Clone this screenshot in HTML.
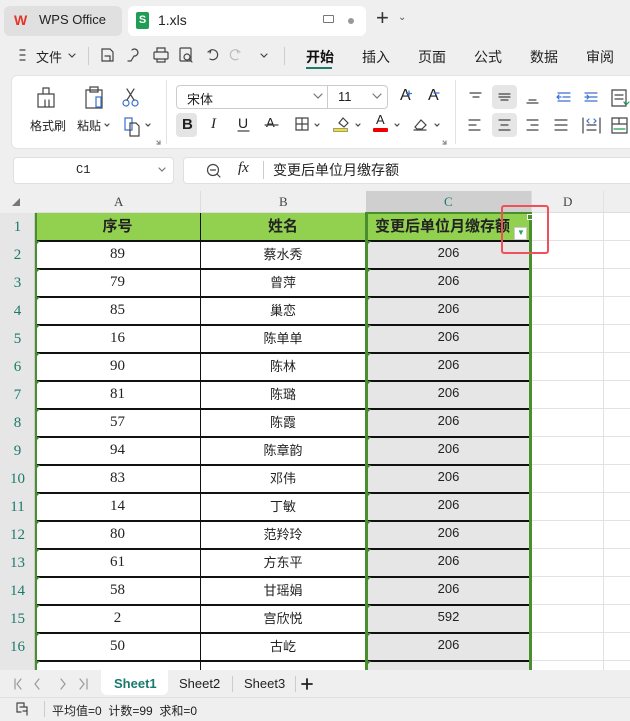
<!DOCTYPE html>
<html><head><meta charset="utf-8"><style>
*{margin:0;padding:0;box-sizing:border-box}
body{width:630px;height:721px;overflow:hidden;background:#efefef;font-family:"Liberation Sans","Noto Sans CJK SC",sans-serif;font-size:13px;color:#222;position:relative}
.a{position:absolute}
.t{position:absolute;white-space:nowrap}
svg.ic{position:absolute;left:0;top:0;width:630px;height:721px;pointer-events:none;z-index:5}
.cell{position:absolute;text-align:center;font-size:14px;line-height:28px;height:28px}
</style></head><body>
<div class="a" style="left:4px;top:6px;width:118px;height:30px;background:#e0e0e0;border-radius:6px"></div>
<div class="t" style="left:14px;top:12px;color:#e5352b;font-weight:bold;font-size:14px">W</div>
<div class="t" style="left:39px;top:12px;font-size:13px;color:#222">WPS Office</div>
<div class="a" style="left:128px;top:6px;width:238px;height:30px;background:#fff;border-radius:6px"></div>
<div class="a" style="left:136px;top:12px;width:13px;height:17px;background:#1f9d55;border-radius:2px;color:#fff;font-size:11px;font-weight:bold;text-align:center;line-height:17px">S</div>
<div class="t" style="left:158px;top:12px;font-size:14px">1.xls</div>
<div class="a" style="left:323px;top:15px;width:11px;height:8px;border:1px solid #777;border-radius:1px"></div>
<div class="a" style="left:348px;top:18px;width:6px;height:6px;background:#999;border-radius:3px"></div>
<div class="t" style="left:376px;top:5px;font-size:22px;color:#333">+</div>
<div class="t" style="left:398px;top:12px;font-size:10px;color:#555">⌄</div>
<div class="t" style="left:36px;top:47px;font-size:13px">文件</div>
<div class="a" style="left:88px;top:47px;width:1px;height:18px;background:#ccc"></div>
<div class="a" style="left:284px;top:47px;width:1px;height:18px;background:#ccc"></div>
<div class="t" style="left:306px;top:47px;font-size:14px;color:#111;font-weight:bold">开始</div>
<div class="a" style="left:306px;top:67px;width:26px;height:2px;background:#1a7a6b"></div>
<div class="t" style="left:362px;top:47px;font-size:14px">插入</div>
<div class="t" style="left:418px;top:47px;font-size:14px">页面</div>
<div class="t" style="left:474px;top:47px;font-size:14px">公式</div>
<div class="t" style="left:530px;top:47px;font-size:14px">数据</div>
<div class="t" style="left:586px;top:47px;font-size:14px">审阅</div>
<div class="a" style="left:11px;top:75px;width:640px;height:74px;background:#fff;border-radius:6px;border:1px solid #e3e3e3"></div>
<div class="a" style="left:166px;top:80px;width:1px;height:64px;background:#e3e3e3"></div>
<div class="a" style="left:455px;top:80px;width:1px;height:64px;background:#e3e3e3"></div>
<div class="t" style="left:30px;top:117px;font-size:12px">格式刷</div>
<div class="t" style="left:77px;top:117px;font-size:12px">粘贴</div>
<div class="a" style="left:176px;top:85px;width:212px;height:24px;border:1px solid #ccc;border-radius:4px"></div>
<div class="a" style="left:327px;top:86px;width:1px;height:22px;background:#ccc"></div>
<div class="t" style="left:187px;top:89px;font-size:13px">宋体</div>
<div class="t" style="left:338px;top:89px;font-size:13px">11</div>
<div class="t" style="left:400px;top:87px;font-size:16px">A</div>
<div class="t" style="left:428px;top:87px;font-size:16px">A</div>
<div class="a" style="left:176px;top:113px;width:21px;height:24px;background:#e4e4e4;border-radius:4px"></div>
<div class="t" style="left:182px;top:116px;font-size:15px;font-weight:bold">B</div>
<div class="t" style="left:211px;top:116px;font-size:15px;font-style:italic;font-family:'Liberation Serif',serif">I</div>
<div class="t" style="left:238px;top:115px;font-size:14px">U</div>
<div class="t" style="left:266px;top:115px;font-size:13px">A</div>
<div class="a" style="left:333px;top:128px;width:15px;height:4px;background:#f5e400;border:1px solid #999"></div>
<div class="a" style="left:373px;top:128px;width:15px;height:4px;background:#e00;border-radius:1px"></div>
<div class="t" style="left:376px;top:112px;font-size:13px">A</div>
<div class="a" style="left:492px;top:85px;width:25px;height:24px;background:#e6e6e6;border-radius:4px"></div>
<div class="a" style="left:492px;top:113px;width:25px;height:24px;background:#e6e6e6;border-radius:4px"></div>
<div class="a" style="left:13px;top:157px;width:161px;height:27px;background:#fff;border-radius:4px;border:1px solid #e0e0e0"></div>
<div class="t" style="left:76px;top:163px;font-size:12px;font-family:'Liberation Mono',monospace">C1</div>
<div class="a" style="left:183px;top:157px;width:460px;height:27px;background:#fff;border-radius:4px;border:1px solid #e0e0e0"></div>
<div class="t" style="left:238px;top:160px;font-size:15px;font-style:italic;font-family:'Liberation Serif',serif">fx</div>
<div class="a" style="left:263px;top:161px;width:1px;height:18px;background:#ccc"></div>
<div class="t" style="left:273px;top:160px;font-size:14px">变更后单位月缴存额</div>
<div class="a" style="left:0;top:191px;width:630px;height:479px;background:#fff"></div>
<div class="a" style="left:0;top:191px;width:630px;height:22px;background:#efefef;border-bottom:1px solid #ddd"></div>
<div class="a" style="left:366px;top:191px;width:165px;height:22px;background:#cfcfcf"></div>
<div class="a" style="left:0;top:191px;width:35px;height:479px;background:#e6e6e6;border-right:1px solid #ccc"></div>
<div class="a" style="left:0;top:191px;width:35px;height:22px;background:#efefef"></div>
<div class="t" style="left:12px;top:197px;font-size:8px;color:#777">◢</div>
<div class="t" style="left:114px;top:194px;font-size:13px;color:#444;font-family:'Liberation Serif',serif">A</div>
<div class="t" style="left:279px;top:194px;font-size:13px;color:#444;font-family:'Liberation Serif',serif">B</div>
<div class="t" style="left:444px;top:194px;font-size:13px;color:#1a7a6b;font-family:'Liberation Serif',serif">C</div>
<div class="t" style="left:563px;top:194px;font-size:13px;color:#444;font-family:'Liberation Serif',serif">D</div>
<div class="a" style="left:200px;top:191px;width:1px;height:22px;background:#ddd"></div>
<div class="a" style="left:603px;top:191px;width:1px;height:479px;background:#e2e2e2"></div>
<div class="a" style="left:531px;top:191px;width:1px;height:22px;background:#ddd"></div>
<div class="a" style="left:35px;top:213px;width:331px;height:28px;background:#92d050"></div>
<div class="a" style="left:366px;top:241px;width:165px;height:429px;background:#e6e6e6"></div>
<div class="a" style="left:366px;top:213px;width:165px;height:28px;background:#92d050"></div>
<div id="rows"></div>
<script>
var d=[["89","蔡水秀","206"],["79","曾萍","206"],["85","巢恋","206"],["16","陈单单","206"],["90","陈林","206"],["81","陈璐","206"],["57","陈霞","206"],["94","陈章韵","206"],["83","邓伟","206"],["14","丁敏","206"],["80","范羚玲","206"],["61","方东平","206"],["58","甘瑶娟","206"],["2","宫欣悦","592"],["50","古屹","206"]];
var h='';
h+='<div class="cell" style="left:0;top:213px;width:35px;color:#1a7a6b;font-family:Liberation Serif,serif;font-size:15px">1</div>';
h+='<div class="cell" style="left:35px;top:213px;width:165px;font-weight:bold;font-size:15px">序号</div>';
h+='<div class="cell" style="left:200px;top:213px;width:166px;font-weight:bold;font-size:15px">姓名</div>';
h+='<div class="cell" style="left:366px;top:213px;width:165px;font-weight:bold;font-size:15px;text-align:left;padding-left:9px">变更后单位月缴存额</div>';
for(var i=0;i<16;i++){var y=241+i*28;
 h+='<div class="a" style="left:35px;top:'+(y-1)+'px;width:496px;height:1.5px;background:#111"></div>';
 h+='<div class="a" style="left:531px;top:'+(y-1)+'px;width:99px;height:1px;background:#e2e2e2"></div>';
 h+='<div class="a" style="left:36px;top:'+y+'px;width:0;height:0;border-top:4px solid #3a8a2a;border-right:4px solid transparent"></div>';
 h+='<div class="a" style="left:367px;top:'+y+'px;width:0;height:0;border-top:4px solid #3a8a2a;border-right:4px solid transparent"></div>';
 if(i<15){var r=d[i];
 h+='<div class="cell" style="left:0;top:'+y+'px;width:35px;color:#1a7a6b;font-family:Liberation Serif,serif;font-size:15px">'+(i+2)+'</div>';
 h+='<div class="cell" style="left:35px;top:'+(y-1)+'px;width:165px;font-family:Liberation Serif,serif;font-size:15px">'+r[0]+'</div>';
 h+='<div class="cell" style="left:200px;top:'+y+'px;width:166px;font-size:13px">'+r[1]+'</div>';
 h+='<div class="cell" style="left:366px;top:'+(y-2)+'px;width:165px;font-size:13px">'+r[2]+'</div>';}
}
document.getElementById('rows').innerHTML=h;
</script>
<div class="a" style="left:199.5px;top:213px;width:1.5px;height:457px;background:#111"></div>
<div class="a" style="left:35px;top:213px;width:2px;height:457px;background:#4a8f2e"></div>
<div class="a" style="left:365px;top:213px;width:3px;height:457px;background:#4a8f2e"></div>
<div class="a" style="left:529px;top:213px;width:3px;height:457px;background:#4a8f2e"></div>
<div class="a" style="left:365px;top:212px;width:167px;height:2px;background:#4a8f2e"></div>
<div class="a" style="left:527px;top:214px;width:6px;height:6px;background:#4a8f2e;border:1px solid #fff"></div>
<div class="a" style="left:514px;top:227px;width:13px;height:13px;background:#fff;border:1px solid #ccc"></div>
<div class="t" style="left:517px;top:228px;font-size:8px;color:#2aa36b">▼</div>
<div class="a" style="left:501px;top:205px;width:48px;height:49px;border:2px solid #f0505a;border-radius:3px"></div>
<div class="a" style="left:0;top:670px;width:630px;height:27px;background:#efefef"></div>
<div class="a" style="left:101px;top:670px;width:67px;height:25px;background:#fff;border-radius:0 0 6px 6px"></div>
<div class="t" style="left:114px;top:676px;font-size:13px;font-weight:bold;color:#1a7a6b">Sheet1</div>
<div class="t" style="left:179px;top:676px;font-size:13px">Sheet2</div>
<div class="a" style="left:232px;top:676px;width:1px;height:16px;background:#ccc"></div>
<div class="t" style="left:244px;top:676px;font-size:13px">Sheet3</div>
<div class="a" style="left:295px;top:676px;width:1px;height:16px;background:#ccc"></div>
<div class="a" style="left:0;top:697px;width:630px;height:24px;background:#efefef;border-top:1px solid #e0e0e0"></div>
<div class="a" style="left:44px;top:701px;width:1px;height:16px;background:#ccc"></div>
<div class="t" style="left:52px;top:702px;font-size:12px">平均值=0&nbsp; 计数=99&nbsp; 求和=0</div>
<svg class="ic" viewBox="0 0 630 721">
<g fill="none" stroke="#444" stroke-width="1.2" stroke-linecap="round">
<path d="M20 50h5M20 55h5M20 60h5"/>
<path d="M69 54l3 3 3-3"/>
<path d="M102 49h8l3 3v9h-11zM105 56h5v5"/>
<path d="M132 50a3.5 3.5 0 1 1 2 6l-3 5M128 61h3"/>
<rect x="154" y="52" width="14" height="7" rx="1"/><path d="M157 52v-4h8v4M157 59v3h8v-3"/>
<rect x="180" y="48" width="11" height="13" rx="1"/><circle cx="187" cy="57" r="3"/><path d="M189 59l3 3"/>
<path d="M211 50a5 5 0 1 1-1 9M211 50l-3 2M211 50l-1 3"/>
<path d="M237 50a5 5 0 1 0 1 9M237 50l3 2M237 50l1 3" stroke="#bbb"/>
<path d="M261 54l3 3 3-3"/>
<path d="M38 94h16v13h-16zM43 94v-6h6v6M45 100v7M49 100v7"/>
<path d="M86 90h16v18h-16zM90 87h8v5h-8z"/><rect x="96" y="97" width="5" height="10" stroke="#3a6fd0"/>
<circle cx="126" cy="103" r="3" stroke="#3a6fd0"/><circle cx="135" cy="103" r="3" stroke="#3a6fd0"/><path d="M127 100l7-11M134 100l-7-11"/>
<path d="M125 118h7v12h-7z" stroke="#3a6fd0"/><path d="M130 123h6l3 3v10h-9z"/>
<path d="M146 124l2 2 2-2M105 124l2 2 2-2"/>
<path d="M157 141l3 3M160 141v3h-3" stroke="#888"/>
<path d="M314 94l4 4 4-4M373 94l4 4 4-4" stroke="#777"/>
<path d="M409 91v5M406.5 93.5h5" stroke="#3a6fd0"/><path d="M434 93h5" stroke="#3a6fd0"/>
<path d="M238 131h11"/><path d="M265 125h13"/>
<path d="M296 118h12v12h-12zM302 118v12M296 124h12"/><path d="M315 124l2 2 2-2"/>
<path d="M339 123l4-5 5 5-4 4zM356 124l2 2 2-2"/>
<path d="M395 124l2 2 2-2"/>
<path d="M415 127l6-7 5 5-4 4h-5zM414 130h12M435 124l2 2 2-2"/>
<path d="M443 141l3 3M446 141v3h-3" stroke="#888"/>
<path d="M470 93h11M473 97h6"/><path d="M499 94h11M499 97h11M501 100h7"/><path d="M527 103h11M529 100h7"/>
<path d="M558 93h12M563 97h7M558 101h12M557 97h4M557 97l2-2M557 97l2 2" stroke="#3a6fd0"/>
<path d="M585 93h12M590 97h7M585 101h12M585 97h4l-2-2M589 97l-2 2" stroke="#3a6fd0"/>
<path d="M612 90h14v16h-14zM615 95h8M615 99h8"/><path d="M624 102l2 3 3-3" stroke="#1f9d55"/>
<path d="M469 120h11M469 125h7M469 130h11"/><path d="M499 120h11M501 125h7M499 130h11"/>
<path d="M527 120h11M531 125h7M527 130h11"/><path d="M555 120h12M555 125h12M555 130h12"/>
<path d="M583 118v15M600 118v15M587 125h9M587 130h9"/><path d="M589 119l-2 2 2 2M594 119l2 2-2 2" stroke="#3a6fd0"/>
<path d="M612 118h15v15h-15zM612 124h15M619 118v6"/><path d="M614 129h11" stroke="#1f9d55"/>
<path d="M159 168l3 3 3-3" stroke="#777"/>
<circle cx="213" cy="170" r="5.5"/><path d="M210.5 170h5M217 174l3 3"/>
<path d="M15 679v10M21 679l-4 5 4 5M39 679l-4 5 4 5M61 679l4 5-4 5M80 679l4 5-4 5M87 679v10" stroke="#999"/>
<path d="M302 684h10M307 679v10" stroke="#222" stroke-width="1.8"/>
<path d="M17 703h7v3M17 703v9h4M20 707h7v8M23 711h4" stroke="#444"/>
</g>
</svg>
</body></html>
